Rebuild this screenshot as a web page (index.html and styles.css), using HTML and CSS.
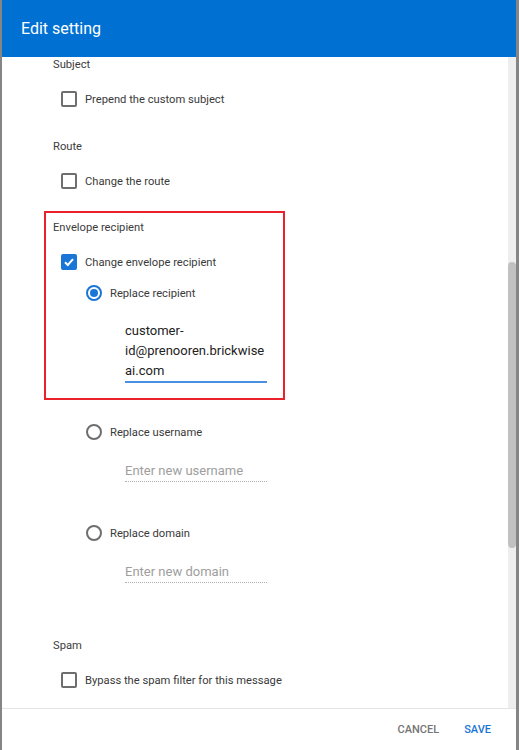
FILE: index.html
```html
<!DOCTYPE html>
<html lang="en">
<head>
    <meta charset="UTF-8">
    <title>Edit setting</title>
    <link rel="stylesheet" href="styles.css">
</head>
<body>
    <div class="dialog">
        <div class="dialog-header">Edit setting</div>

        <div class="dialog-body">
            <div class="content">
                <div class="section first">
                    <div class="section-label">Subject</div>
                    <div class="check-row">
                        <span class="checkbox"></span>
                        <span>Prepend the custom subject</span>
                    </div>
                </div>

                <div class="section">
                    <div class="section-label">Route</div>
                    <div class="check-row">
                        <span class="checkbox"></span>
                        <span>Change the route</span>
                    </div>
                </div>

                <!-- highlighted block -->
                <div class="section highlight">
                    <div class="section-label">Envelope recipient</div>
                    <div class="check-row">
                        <span class="checkbox checked">
                            <svg width="12" height="12" viewBox="0 0 12 12"><path d="M2 6.2 L4.8 9 L10 3.2" fill="none" stroke="#fff" stroke-width="2"/></svg>
                        </span>
                        <span>Change envelope recipient</span>
                    </div>
                    <div class="radio-row">
                        <span class="radio selected"></span>
                        <span>Replace recipient</span>
                    </div>
                    <div class="address">customer-id@prenooren.brickwiseai.com</div>
                </div>

                <div class="radio-row after-box">
                    <span class="radio"></span>
                    <span>Replace username</span>
                </div>
                <div class="text-field">Enter new username</div>

                <div class="radio-row spaced">
                    <span class="radio"></span>
                    <span>Replace domain</span>
                </div>
                <div class="text-field">Enter new domain</div>

                <div class="section spam">
                    <div class="section-label">Spam</div>
                    <div class="check-row">
                        <span class="checkbox"></span>
                        <span>Bypass the spam filter for this message</span>
                    </div>
                </div>
            </div>

            <div class="scrollbar">
                <div class="scroll-thumb"></div>
            </div>
        </div>

        <div class="dialog-footer">
            <button class="btn btn-cancel">Cancel</button>
            <button class="btn btn-save">Save</button>
        </div>
    </div>
</body>
</html>
```

FILE: styles.css
```css
:root {
    --primary: #0070d2;
    --accent: #1a76d6;
    --text: #3a3a3a;
    --muted: #9e9e9e;
    --border: #6e6e6e;
}

* {
    margin: 0;
    padding: 0;
    box-sizing: border-box;
    font-family: Roboto, 'Liberation Sans', sans-serif;
}

body {
    background: #858585;
    height: 750px;
    overflow: hidden;
}

.dialog {
    width: 514px;
    height: 750px;
    margin-left: 2px;
    background: #ffffff;
    display: flex;
    flex-direction: column;
}

.dialog-header {
    height: 57px;
    flex-shrink: 0;
    background: var(--primary);
    color: #ffffff;
    font-size: 16px;
    padding-left: 19px;
    display: flex;
    align-items: center;
}

.dialog-body {
    flex: 1;
    display: flex;
    overflow: hidden;
}

.content {
    flex: 1;
    padding-top: 1px;
    padding-left: 51px;
    color: var(--text);
    font-size: 11.2px;
}

.section {
    margin-top: 33px;
}

.section.first {
    margin-top: 0;
}

.section-label {
    line-height: 14px;
    color: #3c3c3c;
}

.check-row {
    display: flex;
    align-items: center;
    gap: 8px;
    height: 16px;
    margin-top: 19px;
    margin-left: 8px;
}

.checkbox {
    width: 16px;
    height: 16px;
    border: 2px solid var(--border);
    border-radius: 2px;
    display: flex;
    align-items: center;
    justify-content: center;
    flex-shrink: 0;
}

.checkbox.checked {
    background: var(--accent);
    border-color: var(--accent);
}

/* red outline around the envelope block */
.highlight {
    margin-top: 22px;
    margin-left: -9px;
    width: 241px;
    border: 2px solid #e8212a;
    padding: 8px 0 15px 7px;
}

.radio-row {
    display: flex;
    align-items: center;
    gap: 8px;
    height: 16px;
    margin-top: 15px;
    margin-left: 33px;
}

.radio-row.after-box {
    margin-top: 24px;
}

.radio-row.spaced {
    margin-top: 43px;
}

.radio {
    width: 16px;
    height: 16px;
    border: 2px solid var(--border);
    border-radius: 50%;
    display: flex;
    align-items: center;
    justify-content: center;
    flex-shrink: 0;
}

.radio.selected {
    border-color: var(--accent);
}

.radio.selected::after {
    content: '';
    width: 8px;
    height: 8px;
    border-radius: 50%;
    background: var(--accent);
}

.address {
    margin-top: 20px;
    margin-left: 72px;
    width: 142px;
    font-size: 13px;
    line-height: 20px;
    color: #222222;
    overflow-wrap: break-word;
    border-bottom: 2px solid #4a90e2;
}

.text-field {
    margin-top: 21px;
    margin-left: 72px;
    width: 142px;
    height: 21px;
    font-size: 13px;
    line-height: 20px;
    color: var(--muted);
    border-bottom: 1px dotted #b0b0b0;
}

.section.spam {
    margin-top: 56px;
}

.scrollbar {
    width: 8px;
    background: #eeeeee;
    flex-shrink: 0;
}

.scroll-thumb {
    margin-top: 205px;
    height: 286px;
    background: #c1c1c1;
    border-radius: 4px;
}

.dialog-footer {
    height: 42px;
    flex-shrink: 0;
    border-top: 1px solid #e4e4e4;
    display: flex;
    justify-content: flex-end;
    align-items: center;
    gap: 25px;
    padding-right: 25px;
}

.btn {
    background: none;
    border: none;
    font-size: 11px;
    font-weight: 500;
    text-transform: uppercase;
    cursor: pointer;
}

.btn-cancel {
    color: #757575;
}

.btn-save {
    color: var(--accent);
}
```
